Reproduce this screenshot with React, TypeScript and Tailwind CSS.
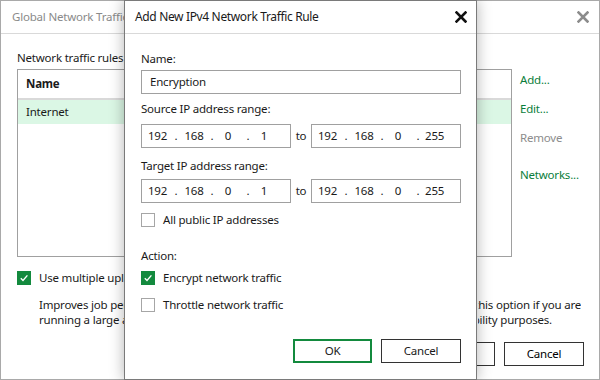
import React from "react";

const FONT = { fontFamily: '"Noto Sans", "Open Sans", sans-serif' };

function CloseIcon({ color }: { color: string }) {
  return (
    <svg width="12" height="12" viewBox="0 0 12 12">
      <path d="M1.5 1.5 L10.5 10.5 M10.5 1.5 L1.5 10.5" stroke={color} strokeWidth="2.6" strokeLinecap="square" />
    </svg>
  );
}

function Check({ checked }: { checked: boolean }) {
  if (checked) {
    return (
      <div className="w-[14px] h-[14px] bg-[#138a3e] flex items-center justify-center shrink-0">
        <svg width="10" height="10" viewBox="0 0 10 10">
          <path d="M1.8 5.2 L4 7.4 L8.4 2.4" stroke="white" strokeWidth="1.4" fill="none" />
        </svg>
      </div>
    );
  }
  return <div className="w-[14px] h-[14px] border border-[#a6a6a6] bg-white shrink-0" />;
}

function IpBox({ last }: { last: string }) {
  return (
    <div className="w-[150px] h-[24px] border border-[#a0a0a0] flex items-center whitespace-nowrap">
      <div className="w-[31px] text-center">192</div>
      <div className="w-[6px] text-center">.</div>
      <div className="w-[30px] text-center">168</div>
      <div className="w-[6px] text-center">.</div>
      <div className="w-[26px] text-center">0</div>
      <div className="w-[14px] text-center">.</div>
      <div className="w-[18px] text-center">{last}</div>
    </div>
  );
}

export default function App() {
  return (
    <div className="w-[600px] h-[380px] relative bg-white overflow-hidden text-[11.5px] tracking-[-0.2px]" style={FONT}>
      {/* Background window */}
      <div className="w-[600px] h-[380px] border border-[#a9a9a9] flex flex-col bg-white">
        <div className="h-[33px] border-b border-[#d9d9d9] flex items-center justify-between pl-[11px] pr-[10px] shrink-0">
          <span className="w-[112px] overflow-hidden whitespace-nowrap text-[#8a8a8a] leading-[16px]">Global Network Traffic Rules</span>
          <CloseIcon color="#8c8c8c" />
        </div>
        <div className="pl-[16px] pr-[15px] flex flex-col">
          <div className="mt-[16px] w-[107px] overflow-hidden whitespace-nowrap leading-[16px] text-[#1a1a1a]">Network traffic rules:</div>
          <div className="mt-[3px] flex">
            <div className="w-[495px] h-[188px] border border-[#a0a0a0] flex flex-col">
              <div className="h-[30px] border-b-2 border-[#d9d9d9] flex items-center pl-[8px] font-bold text-[#1a1a1a]">Name</div>
              <div className="h-[24px] bg-[#dbf7e5] flex items-center pl-[8px] text-[#1a1a1a]">Internet</div>
            </div>
            <div className="ml-[8px] flex flex-col leading-[16px]">
              <div className="mt-[3px] text-[#0a7d3a]">Add...</div>
              <div className="mt-[13px] text-[#0a7d3a]">Edit...</div>
              <div className="mt-[13px] text-[#8c8c8c]">Remove</div>
              <div className="mt-[21px] text-[#0a7d3a]">Networks...</div>
            </div>
          </div>
          <div className="mt-[13px] flex items-center gap-[8px]">
            <Check checked />
            <span className="w-[85px] overflow-hidden whitespace-nowrap leading-[16px] text-[#1a1a1a]">Use multiple upload streams per job</span>
          </div>
          <div className="mt-[11px] ml-[22px] flex flex-col leading-[15px] text-[#1a1a1a]">
            <div className="flex justify-between whitespace-nowrap pr-[3px]">
              <span className="w-[85px] overflow-hidden">Improves job performance on high latency links.</span>
              <span className="w-[103px] overflow-hidden flex justify-end">Disable this option if you are</span>
            </div>
            <div className="flex justify-between whitespace-nowrap pr-[32px]">
              <span className="w-[85px] overflow-hidden">running a large amount of concurrent jobs</span>
              <span className="w-[74px] overflow-hidden flex justify-end">for scalability purposes.</span>
            </div>
          </div>
          <div className="mt-[15px] flex justify-end gap-[9px]">
            <div className="w-[80px] h-[24px] border border-[#333] flex items-center justify-center">OK</div>
            <div className="w-[80px] h-[24px] border border-[#333] flex items-center justify-center">Cancel</div>
          </div>
        </div>
      </div>

      {/* Foreground dialog */}
      <div className="absolute left-[124px] top-0 w-[353px] h-[380px] border border-[#7a7a7a] bg-white flex flex-col shadow-[0_0_14px_rgba(0,0,0,0.3)]">
        <div className="h-[33px] border-b border-[#d9d9d9] flex items-center justify-between pl-[10px] pr-[9px] shrink-0">
          <span className="leading-[16px] text-[12px] tracking-[-0.35px] text-[#1a1a1a]">Add New IPv4 Network Traffic Rule</span>
          <CloseIcon color="#111" />
        </div>
        <div className="pl-[16px] flex flex-col leading-[16px] text-[#1a1a1a]">
          <div className="mt-[17px]">Name:</div>
          <div className="mt-[3px] w-[320px] h-[24px] border border-[#a0a0a0] flex items-center pl-[8px]">Encryption</div>
          <div className="mt-[7px]">Source IP address range:</div>
          <div className="mt-[7px] flex items-center">
            <IpBox last="1" />
            <div className="w-[20px] text-center">to</div>
            <IpBox last="255" />
          </div>
          <div className="mt-[10px]">Target IP address range:</div>
          <div className="mt-[5px] flex items-center">
            <IpBox last="1" />
            <div className="w-[20px] text-center">to</div>
            <IpBox last="255" />
          </div>
          <div className="mt-[9px] flex items-center gap-[8px]">
            <Check checked={false} />
            <span>All public IP addresses</span>
          </div>
          <div className="mt-[20px]">Action:</div>
          <div className="mt-[6px] flex items-center gap-[8px]">
            <Check checked />
            <span>Encrypt network traffic</span>
          </div>
          <div className="mt-[11px] flex items-center gap-[8px]">
            <Check checked={false} />
            <span>Throttle network traffic</span>
          </div>
          <div className="mt-[26px] w-[320px] flex justify-end gap-[9px]">
            <div className="w-[79px] h-[24px] border-2 border-[#138a3e] flex items-center justify-center">OK</div>
            <div className="w-[80px] h-[24px] border border-[#333] flex items-center justify-center">Cancel</div>
          </div>
        </div>
      </div>
    </div>
  );
}
